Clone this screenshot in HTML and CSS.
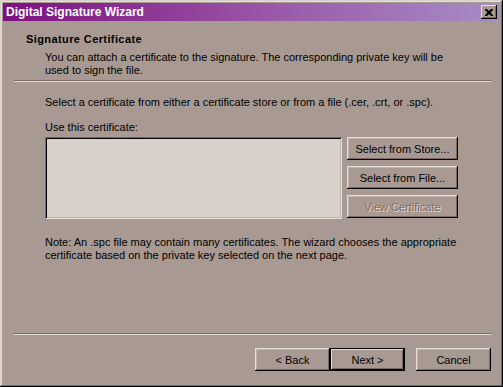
FILE: index.html
```html
<!DOCTYPE html>
<html lang="en">
  <head>
    <meta charset="UTF-8" />
    <title>Digital Signature Wizard</title>
    <link rel="stylesheet" href="styles.css">
  </head>
  <body>
    <div class="window">
      <div class="titlebar">
        <span class="title-text">Digital Signature Wizard</span>
        <div class="close-btn">
          <svg width="8" height="7" viewBox="0 0 8 7">
            <path d="M0 0h2l2 2 2-2h2v1l-2.5 2.5L8 6v1H6L4 5 2 7H0V6l2.5-2.5L0 1z" fill="#000" />
          </svg>
        </div>
      </div>

      <!-- Cabecera del asistente -->
      <div class="header">
        <div class="header-title">Signature Certificate</div>
        <div class="header-desc">
          You can attach a certificate to the signature. The corresponding private key will be<br>
          used to sign the file.
        </div>
      </div>
      <div class="separator header-sep"></div>

      <!-- Contenido -->
      <div class="page">
        <p class="intro">Select a certificate from either a certificate store or from a file (.cer, .crt, or .spc).</p>
        <p class="label">Use this certificate:</p>
        <div class="cert-row">
          <div class="listbox"></div>
          <div class="side-buttons">
            <button class="btn wide">Select from Store...</button>
            <button class="btn wide">Select from File...</button>
            <button class="btn wide disabled">View Certificate</button>
          </div>
        </div>
        <p class="note">
          Note: An .spc file may contain many certificates. The wizard chooses the appropriate<br>
          certificate based on the private key selected on the next page.
        </p>
      </div>

      <div class="separator footer-sep"></div>
      <div class="footer">
        <button class="btn nav">&lt; Back</button>
        <button class="btn nav default">Next &gt;</button>
        <button class="btn nav cancel">Cancel</button>
      </div>
    </div>
  </body>
</html>
```

FILE: styles.css
```css
:root {
  --face: #a89a92;        /* color de fondo del cuadro */
  --shadow: #7c6a62;
  --light: #bfb3ac;
  --highlight: #e6ded8;
  --field: #d8d0ca;
}

* {
  margin: 0;
  padding: 0;
  box-sizing: border-box;
}

body {
  background: var(--face);
  font-family: 'Liberation Sans', Arial, sans-serif;
  font-size: 11px;
  color: #000;
}

.window {
  width: 503px;
  height: 387px;
  padding: 3px;
  background: var(--face);
  display: flex;
  flex-direction: column;
  box-shadow: inset -1px -1px #000, inset 1px 1px var(--field),
    inset -2px -2px var(--shadow), inset 2px 2px var(--highlight);
}

.titlebar {
  height: 18px;
  display: flex;
  align-items: center;
  justify-content: space-between;
  padding: 0 3px 0 3px;
  background: linear-gradient(to right, #7e0f80, #9a5aa8 55%, #a78cc6);
}

.title-text {
  color: #fff;
  font-weight: bold;
  font-size: 12px;
}

.close-btn {
  width: 16px;
  height: 14px;
  display: flex;
  align-items: center;
  justify-content: center;
  background: var(--face);
  box-shadow: inset -1px -1px #000, inset 1px 1px var(--highlight),
    inset -2px -2px var(--shadow);
}

.header {
  height: 59px;
  padding: 12px 0 0 23px;
}

.header-title {
  font-weight: bold;
  line-height: 13px;
  letter-spacing: 0.4px;
}

.header-desc {
  margin: 5px 0 0 19px;
  line-height: 13px;
}

.separator {
  height: 2px;
  border-top: 1px solid var(--shadow);
  border-bottom: 1px solid var(--highlight);
}

.header-sep {
  margin: 0 9px 0 11px;
}

.footer-sep {
  margin: 0 9px 0 11px;
}

.page {
  flex: 1;
  padding: 14px 0 0 42px;
  line-height: 13px;
}

.label {
  margin-top: 12px;
}

.cert-row {
  display: flex;
  gap: 5px;
  margin-top: 3px;
}

.listbox {
  width: 297px;
  height: 82px;
  background: var(--field);
  box-shadow: inset 1px 1px var(--shadow), inset -1px -1px var(--highlight),
    inset 2px 2px #000, inset -2px -2px var(--light);
}

.side-buttons {
  display: flex;
  flex-direction: column;
  gap: 6px;
}

.btn {
  height: 23px;
  border: none;
  background: var(--face);
  font-family: inherit;
  font-size: 11px;
  color: #000;
  box-shadow: inset -1px -1px #000, inset 1px 1px var(--highlight),
    inset -2px -2px var(--shadow), inset 2px 2px var(--light);
}

.btn.wide {
  width: 111px;
}

.btn.disabled {
  color: var(--shadow);
  text-shadow: 1px 1px var(--highlight);
}

.note {
  margin-top: 17px;
}

.footer {
  height: 49px;
  display: flex;
  justify-content: flex-end;
  padding: 13px 9px 0 0;
}

.btn.nav {
  width: 75px;
}

.btn.default {
  box-shadow: inset 0 0 0 1px #000, inset -2px -2px #000, inset 2px 2px var(--highlight),
    inset -3px -3px var(--shadow);
}

.btn.cancel {
  margin-left: 11px;
}
```
